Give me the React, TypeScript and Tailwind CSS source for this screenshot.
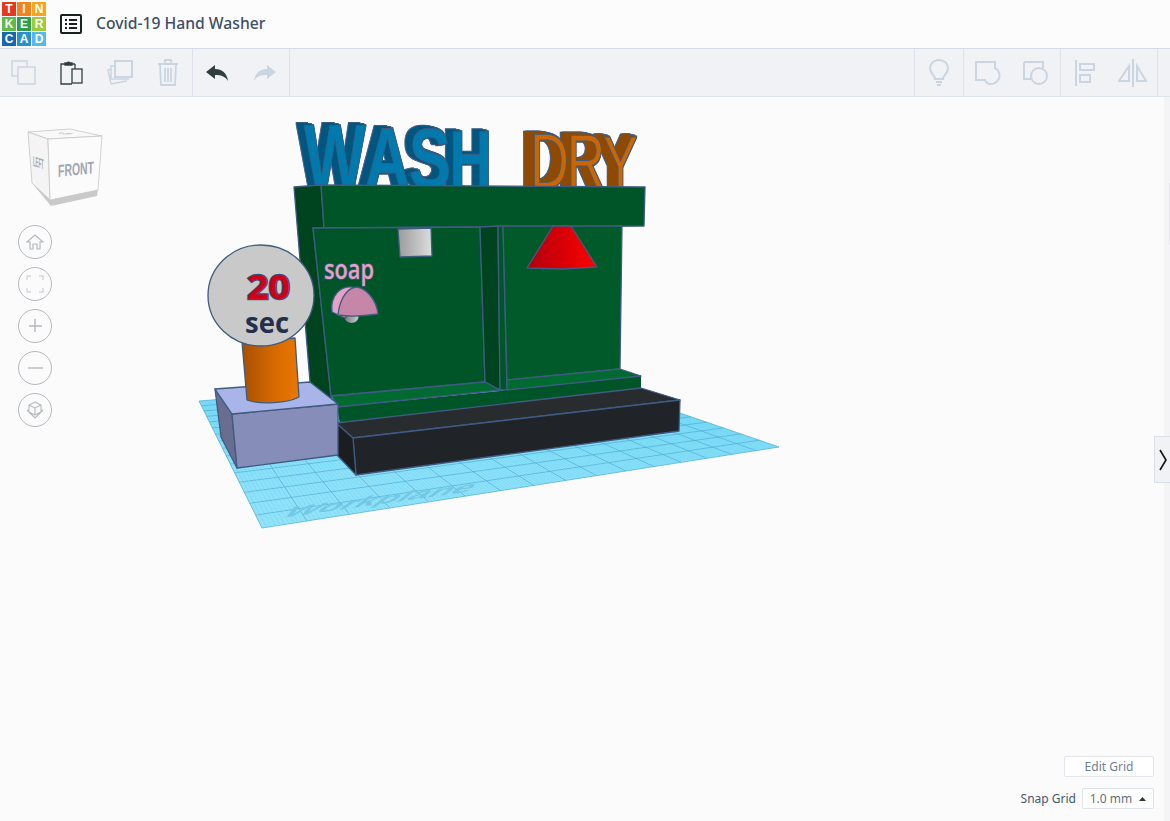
import React from "react";

const D = "#cbd5e1";
const K = "#2f3f40";
const E = "#3f5b82";

function Btn({ children }: { children: React.ReactNode }) {
  return <div className="flex h-full w-12 items-center justify-center">{children}</div>;
}

const tiles = [
  ["T", "bg-[#e8371f]"], ["I", "bg-[#f5821f]"], ["N", "bg-[#f7a51c]"],
  ["K", "bg-[#5dbb46]"], ["E", "bg-[#2f9e4a]"], ["R", "bg-[#9ccb3b]"],
  ["C", "bg-[#1467b0]"], ["A", "bg-[#2a8fd2]"], ["D", "bg-[#58b8e8]"],
];

function Logo() {
  return (
    <div className="ml-[2px] grid h-[44px] w-[44px] grid-cols-3 grid-rows-3 gap-[1px] bg-white">
      {tiles.map(([l, c]) => (
        <div key={l} className={`flex items-center justify-center font-['Liberation_Sans',sans-serif] text-[12px] font-bold leading-none text-white ${c}`}>{l}</div>
      ))}
    </div>
  );
}

function Toolbar() {
  return (
    <div className="flex h-12 w-full items-stretch border-b border-[#dfe3ea] bg-[#f1f2f6]">
      <div className="flex w-[193px] border-r border-[#dde1e9]">
        <Btn>
          <svg width="26" height="26" viewBox="0 0 26 26" fill="none" stroke={D} strokeWidth="1.5">
            <rect x="1" y="1" width="15" height="15" />
            <rect x="7" y="7" width="17" height="17" fill="#f1f2f6" />
          </svg>
        </Btn>
        <Btn>
          <svg width="24" height="26" viewBox="0 0 24 26" fill="none" stroke={K} strokeWidth="1.3">
            <path d="M5 4H1v20h11M15 4h-4M15 4v5" />
            <path d="M5 5V3h2.2a1.4 1.4 0 0 1 2.6 0H12v2z" fill={K} />
            <rect x="12" y="9" width="10" height="14" fill="#f1f2f6" />
          </svg>
        </Btn>
        <Btn>
          <svg width="28" height="26" viewBox="0 0 28 26" fill="none" stroke={D} strokeWidth="1.5">
            <rect x="9" y="1" width="17" height="16" strokeWidth="2" />
            <path d="M9 6H5v13h17v-2M5 9l-3 1 3 14 16-3" />
          </svg>
        </Btn>
        <Btn>
          <svg width="22" height="28" viewBox="0 0 22 28" fill="none" stroke={D} strokeWidth="1.8">
            <path d="M1 5h20M8 4V1h6v3M3 6l1 20h14l1-20M8 9v14M11 9v14M14 9v14" />
          </svg>
        </Btn>
      </div>
      <div className="flex w-[97px] border-r border-[#dde1e9]">
        <Btn>
          <svg width="22" height="16" viewBox="0 0 22 16"><path d="M0 7 9 0v4c7 0 12 4 13 12-3-5-7-6-13-6v4z" fill={K} /></svg>
        </Btn>
        <Btn>
          <svg width="22" height="16" viewBox="0 0 22 16"><path d="M22 7 13 0v4C6 4 1 8 0 16c3-5 7-6 13-6v4z" fill={D} /></svg>
        </Btn>
      </div>
      <div className="flex-1" />
      <div className="flex w-[50px] border-x border-[#dde1e9]">
        <Btn>
          <svg width="20" height="28" viewBox="0 0 20 28" fill="none" stroke={D} strokeWidth="2">
            <path d="M6 20c0-4-5-5-5-11a9 8 0 0 1 18 0c0 6-5 7-5 11z" />
            <path d="M7 23h6M8 26h4" />
          </svg>
        </Btn>
      </div>
      <div className="flex w-[97px] border-r border-[#dde1e9]">
        <Btn>
          <svg width="26" height="26" viewBox="0 0 26 26" fill="none" stroke={D} strokeWidth="2">
            <path d="M1 2h19v6a8 8 0 1 1-8 15 8 8 0 0 1-2-3H1z" />
          </svg>
        </Btn>
        <Btn>
          <svg width="26" height="26" viewBox="0 0 26 26" fill="none" stroke={D} strokeWidth="2">
            <path d="M1 2h19v6M9 19H1V2" />
            <circle cx="16" cy="16" r="8" />
          </svg>
        </Btn>
      </div>
      <div className="flex w-[97px] border-r border-[#dde1e9]">
        <Btn>
          <svg width="22" height="28" viewBox="0 0 22 28" fill="none" stroke={D} strokeWidth="2">
            <path d="M2 1v26" />
            <rect x="6" y="5" width="14" height="6" />
            <rect x="6" y="16" width="10" height="7" />
          </svg>
        </Btn>
        <Btn>
          <svg width="30" height="30" viewBox="0 0 30 30" fill="none" stroke={D} strokeWidth="2">
            <path d="M15 1v28" />
            <path d="M11 8v15H1z" />
            <path d="M19 8v15h9z" />
          </svg>
        </Btn>
      </div>
      <div className="w-[12px]" />
    </div>
  );
}

function Cube() {
  const f = "'Liberation Sans',sans-serif";
  return (
    <svg width="80" height="82" viewBox="0 0 80 82">
      <polygon points="5,55 24,78 70,68 71,60 23,70" fill="#c9c9c9" />
      <polygon points="1,4 21,11 75,8 43,1" fill="#f8f8f8" stroke="#c6c6c6" strokeWidth="0.8" />
      <polygon points="1,4 21,11 23,72 5,55" fill="#f4f4f4" stroke="#c6c6c6" strokeWidth="0.8" />
      <polygon points="21,11 75,8 71,62 23,72" fill="#fbfbfb" stroke="#c6c6c6" strokeWidth="0.8" />
      <text transform="matrix(1,0.06,-0.5,0.3,30,6)" fontSize="7" fontWeight="700" fontFamily={f} fill="#b6b8c0">TOP</text>
      <text transform="matrix(1,-0.1,0,1.15,31,49)" fontSize="15" fontWeight="700" fontFamily={f} fill="#a3a6b1" textLength="36" lengthAdjust="spacingAndGlyphs">FRONT</text>
      <text transform="matrix(0.33,0.1,0,1.1,6,38)" fontSize="13" fontWeight="700" fontFamily={f} fill="#a3a6b1">LEFT</text>
    </svg>
  );
}

function Round({ children }: { children: React.ReactNode }) {
  return (
    <div className="flex h-[34px] w-[34px] items-center justify-center rounded-full border border-[#b4b9be] bg-[#fbfbfc]">
      {children}
    </div>
  );
}

function Side() {
  const s = "#b4b8bd";
  return (
    <div className="absolute left-[18px] top-[31px] flex flex-col">
      <div className="ml-[9px] h-[97px]"><Cube /></div>
      <div className="flex flex-col gap-2">
        <Round>
          <svg width="18" height="18" viewBox="0 0 18 18" fill="none" stroke={s} strokeWidth="1.2"><path d="M1 9 9 2l8 7h-3v7h-3v-5H7v5H4V9z" /></svg>
        </Round>
        <Round>
          <svg width="18" height="18" viewBox="0 0 18 18" fill="none" stroke="#d3d6da" strokeWidth="1.4"><path d="M1 5V1h4M13 1h4v4M17 13v4h-4M5 17H1v-4" /></svg>
        </Round>
        <Round>
          <svg width="18" height="18" viewBox="0 0 18 18" fill="none" stroke={s} strokeWidth="1.4"><path d="M9 2v13M3 9h13" /></svg>
        </Round>
        <Round>
          <svg width="18" height="18" viewBox="0 0 18 18" fill="none" stroke={s} strokeWidth="1.4"><path d="M2 9h15" /></svg>
        </Round>
        <Round>
          <svg width="22" height="22" viewBox="0 0 22 22" fill="none" stroke={s} strokeWidth="1.1"><path d="m11 3 6 3v7l-6 3-6-3V6zM5 6l6 3 6-3M11 9v7M3 11l8 8 8-8" /></svg>
        </Round>
      </div>
    </div>
  );
}

type P = [number, number];

function homography(a: P, b: P, c: P, d: P) {
  const dx1 = b[0] - c[0], dx2 = d[0] - c[0], sx = a[0] - b[0] + c[0] - d[0];
  const dy1 = b[1] - c[1], dy2 = d[1] - c[1], sy = a[1] - b[1] + c[1] - d[1];
  const den = dx1 * dy2 - dx2 * dy1;
  const g = (sx * dy2 - dx2 * sy) / den;
  const h = (dx1 * sy - sx * dy1) / den;
  const A = b[0] - a[0] + g * b[0], B = d[0] - a[0] + h * d[0];
  const C = b[1] - a[1] + g * b[1], F = d[1] - a[1] + h * d[1];
  return (u: number, v: number): P => {
    const w = g * u + h * v + 1;
    return [(A * u + B * v + a[0]) / w, (C * u + F * v + a[1]) / w];
  };
}

function Plane() {
  const a: P = [199, 401], b: P = [560, 372], c: P = [779, 447], d: P = [262, 528];
  const m = homography(a, b, c, d);
  const N = 160;
  const minor: string[] = [];
  const major: string[] = [];
  for (let i = 0; i <= N; i += 1) {
    const t = i / N;
    const p1 = m(t, 0), p2 = m(t, 1), q1 = m(0, t), q2 = m(1, t);
    const s1 = `M${p1[0].toFixed(1)} ${p1[1].toFixed(1)}L${p2[0].toFixed(1)} ${p2[1].toFixed(1)}`;
    const s2 = `M${q1[0].toFixed(1)} ${q1[1].toFixed(1)}L${q2[0].toFixed(1)} ${q2[1].toFixed(1)}`;
    if (i % 10 === 0) major.push(s1, s2);
    else minor.push(s1, s2);
  }
  return (
    <g>
      <polygon points={`${a} ${b} ${c} ${d}`} fill="#a4e9fc" />
      <path d={minor.join("")} stroke="#52cdf0" strokeWidth="0.3" fill="none" />
      <path d={major.join("")} stroke="#45abd0" strokeWidth="0.7" fill="none" />
      <text transform="matrix(1,-0.14,-0.55,0.42,280,518)" fontSize="38" fontWeight="700" fontFamily="'Liberation Sans',sans-serif" fill="#74c8e4" textLength="188" lengthAdjust="spacingAndGlyphs">Workplane</text>
    </g>
  );
}

function ExtrudeFilter({ id, side, depth }: { id: string; side: string; depth: number }) {
  const steps: number[] = [];
  for (let i = 1; i <= depth; i += 1) steps.push(i);
  return (
    <filter id={id} filterUnits="userSpaceOnUse" x="270" y="100" width="400" height="100" colorInterpolationFilters="sRGB">
      {steps.map((i) => (
        <feOffset key={i} in="SourceAlpha" dx={-i} dy={-i * 0.25} result={`o${i}`} />
      ))}
      <feMerge result="solid">
        {steps.map((i) => (
          <feMergeNode key={i} in={`o${i}`} />
        ))}
      </feMerge>
      <feMorphology in="solid" operator="dilate" radius="0.6" result="fat" />
      <feFlood floodColor={E} />
      <feComposite in2="fat" operator="in" result="edge" />
      <feFlood floodColor={side} />
      <feComposite in2="solid" operator="in" result="body" />
      <feMerge>
        <feMergeNode in="edge" />
        <feMergeNode in="body" />
        <feMergeNode in="SourceGraphic" />
      </feMerge>
    </filter>
  );
}

function Scene() {
  const st = { stroke: E, strokeWidth: 1.3, strokeLinejoin: "round" as const };
  const f = "'Liberation Sans',sans-serif";
  return (
    <svg className="absolute left-0 top-0" width="1170" height="724" viewBox="0 97 1170 724">
      <defs>
        <linearGradient id="cyl" x1="0" x2="1" y1="0" y2="0">
          <stop offset="0" stopColor="#a84f00" />
          <stop offset="0.6" stopColor="#d96c00" />
          <stop offset="1" stopColor="#ea7700" />
        </linearGradient>
        <linearGradient id="box" x1="0" x2="1" y1="0" y2="0">
          <stop offset="0" stopColor="#9a9a9a" />
          <stop offset="1" stopColor="#dedede" />
        </linearGradient>
        <linearGradient id="cone" x1="0" x2="1" y1="0" y2="0">
          <stop offset="0" stopColor="#b0000e" />
          <stop offset="1" stopColor="#ff0000" />
        </linearGradient>
        <linearGradient id="noz" x1="0" x2="1" y1="0" y2="0">
          <stop offset="0" stopColor="#777" />
          <stop offset="1" stopColor="#ccc" />
        </linearGradient>
        <ExtrudeFilter id="wash" side="#00567f" depth={7} />
        <ExtrudeFilter id="dry" side="#8f4a00" depth={10} />
      </defs>
      <Plane />

      <g filter="url(#wash)">
        <text transform="translate(304,188) scale(0.73,1)" fontFamily={f} fontWeight="700" fill="#0079ad" stroke={E} strokeWidth="1" letterSpacing="-2">
          <tspan fontSize="90">W</tspan><tspan fontSize="87">A</tspan><tspan fontSize="86">S</tspan><tspan fontSize="82">H</tspan>
        </text>
      </g>
      <g filter="url(#dry)">
        <text transform="translate(530,188) scale(0.7,1)" fontFamily={f} fontWeight="400" fill="#cc6600" stroke={E} strokeWidth="1" letterSpacing="-3">
          <tspan fontSize="77">D</tspan><tspan fontSize="76">R</tspan><tspan fontSize="74">Y</tspan>
        </text>
      </g>

      <polygon points="294,187 321,185 324,228 313,228 331,396 338,420 310,382" fill="#00441f" {...st} />
      <polygon points="321,185 645,187 644,226 324,228" fill="#005528" {...st} />
      <polygon points="313,228 480,227 485,382 331,396" fill="#005528" {...st} />
      <polygon points="480,227 498,226 500,390 485,382" fill="#00441f" {...st} />
      <polygon points="498,226 503,226 507,390 500,390" fill="#005528" {...st} />
      <polygon points="503,226 622,226 620,369 507,380" fill="#005a2a" {...st} />
      <polygon points="337,407 500,391 507,390 641,376 641,389 340,424" fill="#005528" />
      <polygon points="332,396 485,382 500,390 337,407" fill="#006a30" {...st} />
      <polygon points="507,380 620,369 641,376 507,390" fill="#006a30" {...st} />

      <polygon points="336,423 641,388 680,400 353,438" fill="#292c2f" {...st} />
      <polygon points="353,438 680,400 679,431 356,475" fill="#202327" {...st} />
      <polygon points="336,423 353,438 356,475 337,455" fill="#1b1d20" {...st} />

      <polygon points="215,389 232,414 237,468 221,437" fill="#696e90" {...st} />
      <polygon points="232,414 338,404 338,455 237,468" fill="#858db8" {...st} />
      <polygon points="215,389 310,382 338,404 232,414" fill="#a9b4e8" {...st} />

      <path d="M242 342 L295 338 L299 397 C288 403 260 405 247 400 Z" fill="url(#cyl)" {...st} />

      <polygon points="398,229 431,228 432,256 400,257" fill="url(#box)" {...st} />
      <polygon points="527,268 553,226 571,226 597,267 562,269" fill="url(#cone)" {...st} />
      <text x="324" y="279" fontSize="27" fontWeight="600" fontFamily="'Open Sans',sans-serif" fill="#e3a0c8" stroke={E} strokeWidth="1.4" paintOrder="stroke" textLength="50" lengthAdjust="spacingAndGlyphs">soap</text>
      <ellipse cx="351.5" cy="317" rx="7" ry="6" fill="url(#noz)" />
      <path d="M332 312 C330 296 340 286 352 287 L360 300 L345 318 Z" fill="#e3a2c6" {...st} />
      <path d="M338 315 C340 295 350 287 357 287 C368 289 377 302 378 314 C365 316 350 317 338 315Z" fill="#c586a8" {...st} />

      <ellipse cx="261" cy="295.5" rx="53" ry="50.5" fill="#c9c9c9" {...st} />
      <text x="247" y="299" fontSize="34" fontWeight="700" fontFamily="'Open Sans',sans-serif" fill="#d10018" stroke="#3a4f7c" strokeWidth="2.4" paintOrder="stroke" textLength="43" lengthAdjust="spacingAndGlyphs">20</text>
      <text x="245" y="333" fontSize="28" fontWeight="700" fontFamily="'Open Sans',sans-serif" fill="#22304c" textLength="44" lengthAdjust="spacingAndGlyphs">sec</text>
    </svg>
  );
}

export default function App() {
  return (
    <div className="flex h-[821px] w-[1170px] flex-col overflow-hidden bg-[#fbfbfc] font-['Noto_Sans','Open_Sans',sans-serif]">
      <header className="flex h-[49px] shrink-0 items-center border-b border-[#d5dbe5] bg-[#fcfcfd]">
        <Logo />
        <svg className="ml-[14px]" width="22" height="20" viewBox="0 0 22 20" fill="none">
          <rect x="1" y="1" width="20" height="18" rx="1" stroke="#1a1f21" strokeWidth="2" />
          <path d="M5 6h2M9 6h8M5 10h2M9 10h8M5 14h2M9 14h8" stroke="#1a1f21" strokeWidth="2.2" />
        </svg>
        <span className="ml-[14px] text-[15.7px] font-medium text-[#3c4f66]">Covid-19 Hand Washer</span>
      </header>
      <div className="shrink-0"><Toolbar /></div>
      <main className="relative flex-1">
        <Scene />
        <Side />
        <div className="absolute bottom-0 right-0 top-0 w-[6px] bg-[#f4f4f6]" />
        <div className="absolute right-0 top-[86px] h-[62px] w-[1px] bg-[#e8e8ec]" />
        <div className="absolute right-0 top-[339px] flex h-[47px] w-[16px] items-center justify-center border border-r-0 border-[#d9dee8] bg-[#f1f2f6]">
          <svg width="8" height="22" viewBox="0 0 8 22" fill="none"><path d="m1 1 6 10-6 10" stroke="#111" strokeWidth="1.6" /></svg>
        </div>
        <div className="absolute bottom-[12px] right-[16px] flex flex-col items-end gap-[11px]">
          <button className="flex h-[21px] w-[90px] items-center justify-center rounded-[2px] border border-[#e3e6ee] bg-white text-[12px] text-[#6d7f92]">Edit Grid</button>
          <div className="flex items-center gap-[6px]">
            <span className="text-[12px] text-[#44586e]">Snap Grid</span>
            <div className="flex h-[21px] w-[72px] items-center justify-center gap-[7px] rounded-[2px] border border-[#dfe3ea] bg-white text-[12px] text-[#5f6f80]">
              <span>1.0 mm</span>
              <svg width="7" height="4" viewBox="0 0 7 4"><path d="M0 4 3.5 0 7 4z" fill="#333" /></svg>
            </div>
          </div>
        </div>
      </main>
    </div>
  );
}
